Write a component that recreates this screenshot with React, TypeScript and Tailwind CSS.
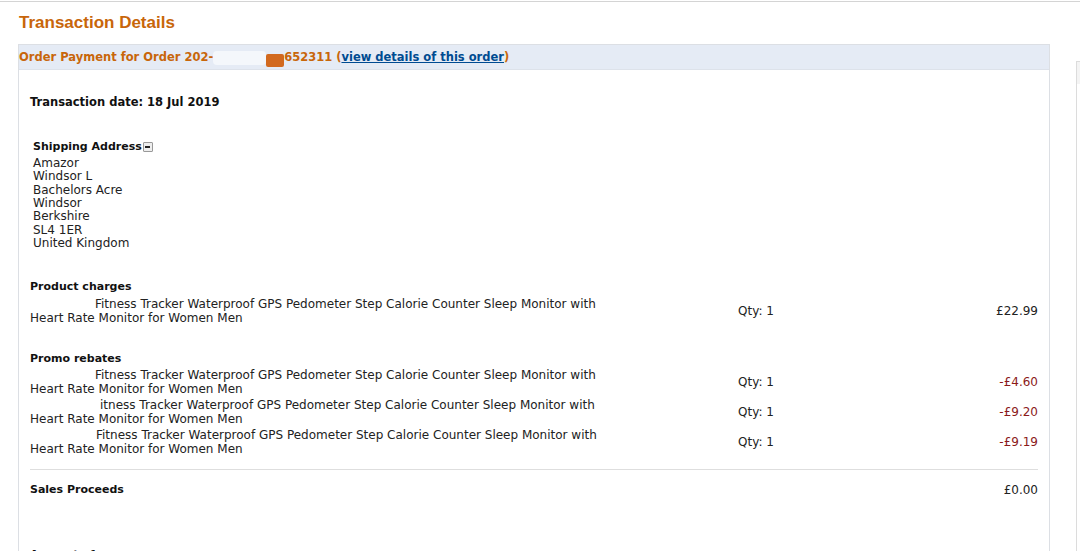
import React from 'react';

const body = "font-['DejaVu_Sans',Verdana,sans-serif]";

const promos = [
  { gap: 'w-[65px]', first: 'Fitness Tracker Waterproof GPS Pedometer Step Calorie Counter Sleep Monitor with', amount: '-£4.60' },
  { gap: 'w-[70px]', first: 'itness Tracker Waterproof GPS Pedometer Step Calorie Counter Sleep Monitor with', amount: '-£9.20' },
  { gap: 'w-[66px]', first: 'Fitness Tracker Waterproof GPS Pedometer Step Calorie Counter Sleep Monitor with', amount: '-£9.19' },
];

const ItemRow: React.FC<{ gap: string; first: string; amount: string; red?: boolean }> = ({ gap, first, amount, red }) => (
  <div className="flex items-center text-[12px]">
    <div className="w-[708px] leading-[14px]">
      <div className="flex">
        <span className={`inline-block shrink-0 ${gap}`} />
        <span className="whitespace-nowrap">{first}</span>
      </div>
      <div>Heart Rate Monitor for Women Men</div>
    </div>
    <div className="w-[120px]">Qty: 1</div>
    <div className={`flex-1 text-right ${red ? 'text-[#8b1a1a]' : 'text-[#222]'}`}>{amount}</div>
  </div>
);

const App: React.FC = () => {
  const address = ['Amazor', 'Windsor L', 'Bachelors Acre', 'Windsor', 'Berkshire', 'SL4 1ER', 'United Kingdom'];

  return (
    <div className={`w-[1080px] h-[551px] overflow-hidden bg-white text-[11px] text-[#111] ${body}`}>
      <div className="h-px mt-px bg-[#d4d4d4]" />
      <div className="flex">
        <div className="ml-[18px] w-[1032px] shrink-0">
          {/* Title */}
          <h1 className="h-[42px] pt-[11px] pl-px font-['Liberation_Sans',Arial,sans-serif] text-[17px] leading-[20px] font-bold text-[#c8660a]">
            Transaction Details
          </h1>

          {/* Panel */}
          <div className="border border-[#dcdfe4] border-b-0 h-[520px]">
            <div className="h-[25px] pt-px bg-[#e5ebf5] border-b border-[#dde2ea] flex items-center text-[11.5px] font-bold text-[#c8660a]">
              <span>Order Payment for Order 202-</span>
              <span className="inline-block w-[53px] h-[14px] bg-[#f4f7fb] rounded-sm" />
              <span className="inline-block w-[18px] h-[13px] mt-[5px] bg-[#d2691e] rounded-[2px]" />
              <span>652311 (</span>
              <span className="text-[#004b91] underline">view details of this order</span>
              <span>)</span>
            </div>

            <div className="pl-[11px] pr-[11px]">
              <div className="mt-[25px] text-[11.5px] font-bold leading-[14px]">Transaction date: 18 Jul 2019</div>

              <div className="mt-[31px] ml-[3px]">
                <div className="flex items-center font-bold leading-[14px]">
                  Shipping Address
                  <span className="ml-px w-[10px] h-[10px] border border-[#999] bg-[#eee] rounded-[1px] flex items-center justify-center">
                    <span className="w-[5px] h-[2px] bg-[#222]" />
                  </span>
                </div>
                <div className="mt-[3px] text-[12px] leading-[13.33px] text-[#222]">
                  {address.map((l, i) => (
                    <div key={i}>{l}</div>
                  ))}
                </div>
              </div>

              <div className="mt-[30px] font-bold leading-[14px]">Product charges</div>
              <div className="mt-[3px] text-[#222]">
                <ItemRow gap="w-[65px]" first="Fitness Tracker Waterproof GPS Pedometer Step Calorie Counter Sleep Monitor with" amount="£22.99" />
              </div>

              <div className="mt-[27px] font-bold leading-[14px]">Promo rebates</div>
              <div className="mt-[2px] flex flex-col gap-[2px] text-[#222]">
                {promos.map((p, i) => (
                  <ItemRow key={i} gap={p.gap} first={p.first} amount={p.amount} red />
                ))}
              </div>

              <div className="mt-[13px] border-t border-[#dedede]" />
              <div className="mt-[13px] flex font-bold leading-[14px]">
                <span className="flex-1">Sales Proceeds</span>
                <span className="font-normal text-[12px] text-[#222]">£0.00</span>
              </div>

              <div className="mt-[51px] font-bold leading-[14px]">Amount of</div>
            </div>
          </div>
        </div>

        {/* Adjacent panel at right edge */}
        <div className="ml-[26px] mt-[59px] flex-1 border-l border-t border-[#dcdcdc]">
          <div className="h-[22px] bg-[#f4f4f4]" />
        </div>
      </div>
    </div>
  );
};

export default App;
